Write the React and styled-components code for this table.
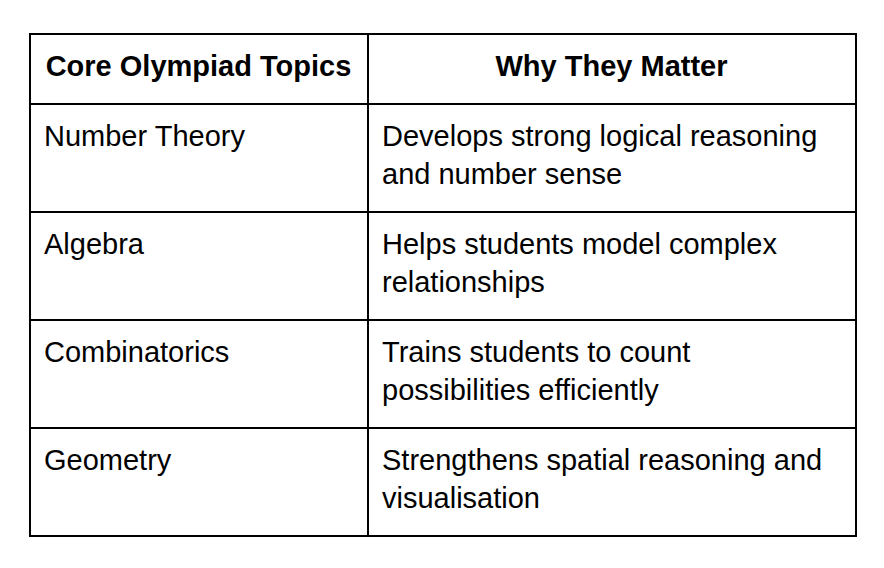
import React from "react"
import styled, { createGlobalStyle } from "styled-components"

const GlobalStyle = createGlobalStyle`
  body {
    margin: 0;
    background: #ffffff;
    font-family: "Liberation Sans", Arial, sans-serif;
  }
`

const Page = styled.div`
  width: 884px;
  height: 568px;
  padding: 33px 0 0 29px;
  box-sizing: border-box;
`

const Table = styled.table`
  border-collapse: collapse;
  width: 826px;
  table-layout: fixed;
  color: #000000;
  font-size: 29px;
  line-height: 38px;
`

const Col = styled.col`
  width: ${(props) => props.$width};
`

const Th = styled.th`
  border: 2px solid #000000;
  padding: 12px 14px 18px 13px;
  font-weight: bold;
  text-align: center;
  vertical-align: top;
`

const Td = styled.td`
  border: 2px solid #000000;
  padding: 12px 14px 18px 13px;
  vertical-align: top;
  text-align: left;
  height: 76px;
`

const rows = [
  ["Number Theory", "Develops strong logical reasoning and number sense"],
  ["Algebra", "Helps students model complex relationships"],
  ["Combinatorics", "Trains students to count possibilities efficiently"],
  ["Geometry", "Strengthens spatial reasoning and visualisation"],
]

const App = () => {
  return (
    <Page>
      <GlobalStyle />
      <Table>
        <colgroup>
          <Col $width="338px" />
          <Col $width="488px" />
        </colgroup>
        <thead>
          <tr>
            <Th>Core Olympiad Topics</Th>
            <Th>Why They Matter</Th>
          </tr>
        </thead>
        <tbody>
          {rows.map(([topic, why]) => (
            <tr key={topic}>
              <Td>{topic}</Td>
              <Td>{why}</Td>
            </tr>
          ))}
        </tbody>
      </Table>
    </Page>
  )
}

export default App
